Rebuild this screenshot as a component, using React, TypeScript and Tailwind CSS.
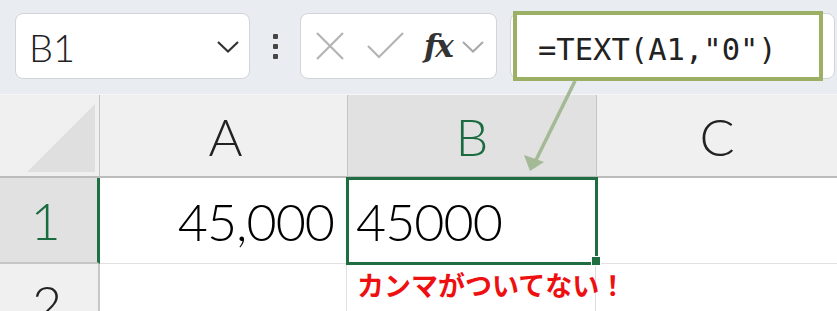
import React from "react";

const sans = "font-['Lato','Liberation_Sans',sans-serif]";

export default function App() {
  return (
    <div className={`relative w-[837px] h-[311px] overflow-hidden bg-white ${sans}`}>
      {/* Toolbar */}
      <div className="h-[94px] bg-[#e9edf1] flex items-start pt-[13px] pl-[15px] pr-[2px]">
        <div className="w-[235px] h-[66px] rounded-[8px] border border-[#d2d4d7] bg-white flex items-center justify-between pl-[13px] pr-[9px]">
          <span className="text-[38px] font-light leading-none text-[#222] mt-[2px]">B1</span>
          <svg width="24" height="14" viewBox="0 0 24 14" className="mt-[2px]">
            <path d="M2 2 L12 11.5 L22 2" fill="none" stroke="#333" strokeWidth="2.2" />
          </svg>
        </div>
        <div className="w-[50px] h-[66px] flex flex-col items-center justify-center gap-[5px]">
          <div className="w-[5px] h-[5px] rounded-[1px] bg-[#454545]" />
          <div className="w-[5px] h-[5px] rounded-[1px] bg-[#454545]" />
          <div className="w-[5px] h-[5px] rounded-[1px] bg-[#454545]" />
        </div>
        <div className="w-[197px] h-[66px] rounded-[8px] border border-[#d2d4d7] bg-white flex items-center pl-[14px]">
          <svg width="30" height="30" viewBox="0 0 30 30">
            <path d="M2 2 L28 28 M28 2 L2 28" stroke="#b4b4b4" strokeWidth="2.2" fill="none" />
          </svg>
          <svg width="38" height="28" viewBox="0 0 38 28" className="ml-[22px]">
            <path d="M1 14 L12 25 L36 1" stroke="#b4b4b4" strokeWidth="2.2" fill="none" />
          </svg>
          <span className="ml-[19px] font-['DejaVu_Serif',serif] italic font-bold text-[31px] leading-none text-[#333] tracking-[-2px] mt-[1px]">
            fx
          </span>
          <svg width="24" height="14" viewBox="0 0 24 14" className="ml-[9px] mt-[2px]">
            <path d="M2 2 L12 11.5 L22 2" fill="none" stroke="#a8a8a8" strokeWidth="2" />
          </svg>
        </div>
        <div className="ml-[13px] flex-1 h-[66px] rounded-[8px] border border-[#d2d4d7] bg-white flex items-center pl-[27px]">
          <span className="font-['DejaVu_Sans_Mono',monospace] text-[30.5px] leading-none text-[#222] mt-[9px]">
            =TEXT(A1,"0")
          </span>
        </div>
      </div>

      {/* Column header row */}
      <div className="flex h-[84px] bg-[#f0f0f0] border-t border-[#f5f6f7]">
        <div className="w-[100px] border-r border-[#c4c4c4] border-b-2 border-b-[#bcbcbc] flex items-end justify-end pr-[4px] pb-[4px]">
          <svg width="68" height="68" viewBox="0 0 68 68">
            <polygon points="68,0 68,68 0,68" fill="#dfdfdf" />
          </svg>
        </div>
        <div className="w-[248px] border-r border-[#c4c4c4] border-b-2 border-b-[#bcbcbc] flex items-center justify-center text-[52px] font-light text-[#222] leading-none pl-[4px]">
          A
        </div>
        <div className="w-[249px] bg-[#e1e1e1] border-r border-[#c4c4c4] border-b-2 border-b-[#bcbcbc] flex items-center justify-center text-[52px] font-light text-[#1a6b3f] leading-none">
          B
        </div>
        <div className="flex-1 border-b-2 border-b-[#bcbcbc] flex items-center justify-center text-[52px] font-light text-[#222] leading-none">
          C
        </div>
      </div>

      {/* Row 1 */}
      <div className="flex h-[86px]">
        <div className="w-[100px] bg-[#e1e1e1] border-r-[3px] border-r-[#1f7145] border-b-2 border-b-[#c6c6c6] flex items-center justify-center text-[52px] font-light text-[#1a6b3f] leading-none pr-[6px]">
          1
        </div>
        <div className="w-[247px] border-r border-[#e1e1e1] border-b border-b-[#e1e1e1] flex items-center justify-end pr-[12px] text-[52px] font-light text-[#000] leading-none tracking-[-1px]">
          45,000
        </div>
        <div className="relative w-[249px] border-r border-[#e1e1e1] border-b border-b-[#e1e1e1] flex items-center pl-[9px] text-[52px] font-light text-[#000] leading-none tracking-[-1px]">
          45000
          <div className="absolute left-[-1px] top-[-1px] w-[252px] h-[88px] border-[3px] border-[#1e6e41]" />
          <div className="absolute left-[244px] top-[78px] w-[10px] h-[10px] bg-[#1e6e41] border border-white" />
        </div>
        <div className="flex-1 border-b border-b-[#e1e1e1]" />
      </div>

      {/* Row 2 */}
      <div className="flex h-[50px]">
        <div className="w-[100px] bg-[#f0f0f0] border-r-2 border-r-[#c6c6c6] flex justify-center text-[52px] font-light text-[#222] leading-none pt-[13px] pr-[4px]">
          2
        </div>
        <div className="w-[247px] border-r border-[#e1e1e1]" />
        <div className="w-[249px] border-r border-[#dcdcdc]" />
        <div className="flex-1" />
      </div>

      {/* Annotations */}
      <div className="absolute left-[513px] top-[11px] w-[310px] h-[70px] border-4 border-[#9bb064] pointer-events-none" />
      <svg className="absolute left-0 top-0 pointer-events-none" width="837" height="311" viewBox="0 0 837 311">
        <line x1="575" y1="81" x2="536" y2="160" stroke="#a4b995" strokeWidth="3.5" />
        <polygon points="530,171 524,155 544,162" fill="#a4b995" />
      </svg>
      <div className="absolute left-[357px] top-[271px] font-['Noto_Sans_CJK_JP',sans-serif] font-bold text-[27px] leading-none text-[#ee1010] whitespace-nowrap">
        カンマがついてない！
      </div>
    </div>
  );
}
